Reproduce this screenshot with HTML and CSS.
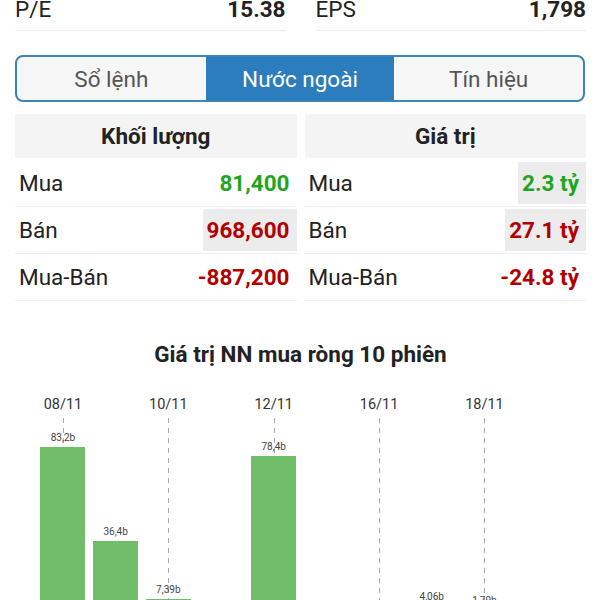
FILE: index.html
```html
<!DOCTYPE html>
<html lang="vi">
<head>
    <meta charset="UTF-8">
    <meta name="viewport" content="width=device-width, initial-scale=1.0">
    <title>Nước ngoài</title>
    <link rel="stylesheet" href="styles.css">
</head>
<body>

<div class="page">
    <!-- Chỉ số -->
    <div class="stats">
        <div class="stat"><span>P/E</span><span class="stat-value">15.38</span></div>
        <div class="stat"><span>EPS</span><span class="stat-value">1,798</span></div>
    </div>

    <!-- Tabs -->
    <div class="tabs">
        <div class="tab">Sổ lệnh</div>
        <div class="tab active">Nước ngoài</div>
        <div class="tab">Tín hiệu</div>
    </div>

    <!-- Khối lượng / Giá trị -->
    <div class="tables">
        <div class="table">
            <div class="table-head">Khối lượng</div>
            <div class="row"><span class="label">Mua</span><span class="val up">81,400</span></div>
            <div class="row"><span class="label">Bán</span><span class="val down hl">968,600</span></div>
            <div class="row"><span class="label">Mua-Bán</span><span class="val down">-887,200</span></div>
        </div>
        <div class="table">
            <div class="table-head">Giá trị</div>
            <div class="row"><span class="label">Mua</span><span class="val up hl">2.3 tỷ</span></div>
            <div class="row"><span class="label">Bán</span><span class="val down hl">27.1 tỷ</span></div>
            <div class="row"><span class="label">Mua-Bán</span><span class="val down">-24.8 tỷ</span></div>
        </div>
    </div>

    <h2 class="chart-title">Giá trị NN mua ròng 10 phiên</h2>

    <div class="chart">
        <div class="slot marked">
            <div class="date">08/11</div>
            <div class="plot"><span class="bar-val">83,2b</span><div class="bar" style="height:167px"></div></div>
        </div>
        <div class="slot">
            <div class="date"></div>
            <div class="plot"><span class="bar-val">36,4b</span><div class="bar" style="height:73px"></div></div>
        </div>
        <div class="slot marked">
            <div class="date">10/11</div>
            <div class="plot"><span class="bar-val">7,39b</span><div class="bar" style="height:15px"></div></div>
        </div>
        <div class="slot">
            <div class="date"></div>
            <div class="plot"></div>
        </div>
        <div class="slot marked">
            <div class="date">12/11</div>
            <div class="plot"><span class="bar-val">78,4b</span><div class="bar" style="height:158px"></div></div>
        </div>
        <div class="slot">
            <div class="date"></div>
            <div class="plot"></div>
        </div>
        <div class="slot marked">
            <div class="date">16/11</div>
            <div class="plot"></div>
        </div>
        <div class="slot">
            <div class="date"></div>
            <div class="plot"><span class="bar-val">4,06b</span><div class="bar" style="height:8px"></div></div>
        </div>
        <div class="slot marked">
            <div class="date">18/11</div>
            <div class="plot"><span class="bar-val">1,79b</span><div class="bar" style="height:4px"></div></div>
        </div>
        <div class="slot">
            <div class="date"></div>
            <div class="plot"></div>
        </div>
    </div>
</div>

</body>
</html>
```

FILE: styles.css
```css
body {
    margin: 0;
    padding: 0;
    background-color: #fff;
    font-family: Roboto, "Noto Sans", sans-serif;
    color: #222;
}

.page {
    padding: 0 14px 0 15px;
}

/* Chỉ số */
.stats {
    display: grid;
    grid-template-columns: 1fr 1fr;
    gap: 30px;
}

.stat {
    display: flex;
    justify-content: space-between;
    font-size: 22.5px;
    line-height: 18px;
    height: 30px;
    border-bottom: 1px solid #eee;
}

.stat-value {
    font-weight: bold;
}

/* Tabs */
.tabs {
    display: grid;
    grid-template-columns: 1fr 1fr 1fr;
    margin-top: 24px;
    margin-right: 1px;
    height: 43px;
    border: 2px solid #3f82b6;
    border-radius: 8px;
    overflow: hidden;
    background-color: #f6f6f6;
}

.tab {
    display: flex;
    justify-content: center;
    align-items: center;
    font-size: 22.5px;
    color: #555;
}

.tab.active {
    background-color: #2b7dbe;
    color: #fff;
}

/* Bảng */
.tables {
    display: grid;
    grid-template-columns: 1fr 1fr;
    gap: 8px;
    margin-top: 12px;
}

.table-head {
    height: 44px;
    display: flex;
    justify-content: center;
    align-items: center;
    background-color: #f4f4f4;
    font-size: 22.5px;
    font-weight: bold;
    margin-bottom: 2px;
}

.row {
    display: flex;
    justify-content: space-between;
    align-items: stretch;
    height: 46px;
    border-bottom: 1px solid #eee;
    font-size: 22.5px;
}

.label {
    display: flex;
    align-items: center;
    padding-left: 4px;
}

.val {
    display: flex;
    align-items: center;
    font-weight: bold;
    padding: 0 7px 0 4px;
    margin: 2px 0;
}

.val.hl {
    background-color: #ececec;
}

.up {
    color: #1fa51f;
}

.down {
    color: #b20000;
}

/* Biểu đồ */
.chart-title {
    margin: 41px 0 0;
    text-align: center;
    font-size: 22.5px;
    line-height: 24px;
    font-weight: bold;
}

.chart {
    display: grid;
    grid-template-columns: repeat(10, 52.7px);
    margin: 31px 0 0 21.6px;
}

.slot {
    display: flex;
    flex-direction: column;
    align-items: center;
}

.date {
    height: 16px;
    line-height: 16px;
    font-size: 14.5px;
    color: #333;
    margin-bottom: 5px;
    white-space: nowrap;
}

.plot {
    position: relative;
    width: 100%;
    height: 196px;
    display: flex;
    flex-direction: column;
    justify-content: flex-end;
    align-items: center;
}

.slot.marked .plot::before {
    content: "";
    position: absolute;
    left: 50%;
    top: 0;
    bottom: 0;
    width: 1px;
    background: repeating-linear-gradient(to bottom, #aaa 0, #aaa 5px, transparent 5px, transparent 10px);
}

.bar-val {
    position: relative;
    font-size: 10px;
    line-height: 12px;
    color: #444;
    margin-bottom: 3px;
}

.bar {
    position: relative;
    width: 45px;
    background-color: #70bd6a;
}
```
